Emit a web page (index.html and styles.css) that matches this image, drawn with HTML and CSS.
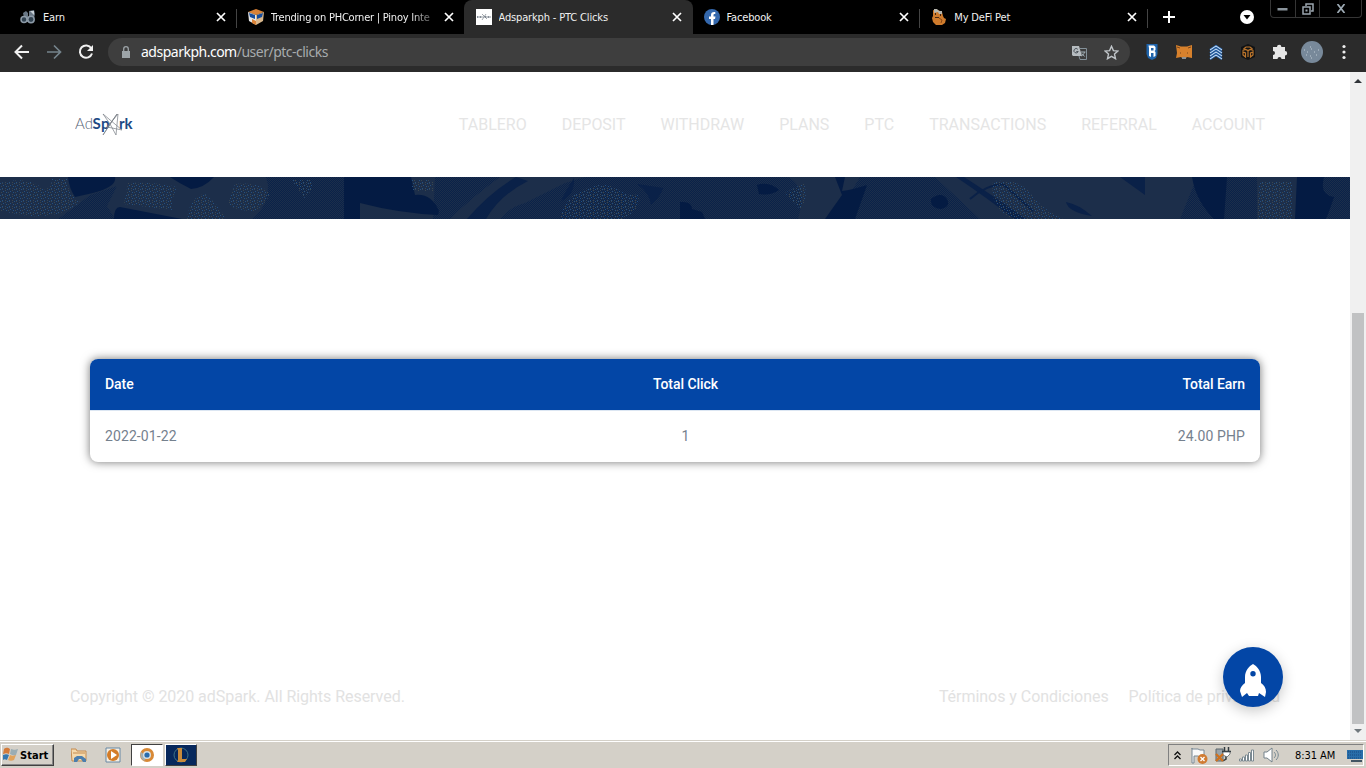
FILE: index.html
```html
<!DOCTYPE html>
<html lang="en">
<head>
    <meta charset="UTF-8">
    <meta name="viewport" content="width=device-width, initial-scale=1.0">
    <title>Adsparkph - PTC Clicks</title>
    <link rel="stylesheet" href="styles.css">
</head>
<body>
    <div class="tab-strip">
        <div class="tab">
            <svg class="favicon" viewBox="0 0 16 16"><path d="M3 4l3-2 2 2v9H5z M9 2l5-1 1 4-2 8H9z" fill="#697785"/><circle cx="4" cy="10.500" r="3" fill="#30414f" stroke="#8c9aa7" stroke-width="1.500"/><circle cx="11" cy="10.500" r="3.200" fill="#30414f" stroke="#8c9aa7" stroke-width="1.500"/><path d="M10 2l4 0v4z" fill="#c8d0d6"/></svg>
            <span class="tab-title">Earn</span>
            <svg class="close" viewBox="0 0 10 10"><path d="M1 1l8 8M9 1l-8 8"/></svg>
        </div>
        <div class="tab divided">
            <svg class="favicon" viewBox="0 0 16 16"><path d="M0 3l8-3 8 3-8 3z" fill="#d98237"/><path d="M0 3l8 3v10l-7-4z" fill="#e8e8e8"/><path d="M16 3l-8 3v10l7-4z" fill="#d9b78c"/><path d="M1 4l6 2v4l-5-2z M15 4l-6 2v4l5-2z" fill="#164c9b"/><path d="M4 10l4 2v4l-4-2z" fill="#d98237"/></svg>
            <span class="tab-title faded">Trending on PHCorner | Pinoy Inte</span>
            <svg class="close" viewBox="0 0 10 10"><path d="M1 1l8 8M9 1l-8 8"/></svg>
        </div>
        <div class="tab active">
            <svg class="favicon" viewBox="0 0 16 16"><path d="M0 0h16v16H0z" fill="#fff"/><path d="M1 8h5M9 8h6" stroke="#868e98" stroke-width="2" stroke-dasharray="1 .5"/><path d="M6 5l5 5M10 5l-4 6M6 8h4" stroke="#79818a" stroke-width=".7"/></svg>
            <span class="tab-title">Adsparkph - PTC Clicks</span>
            <svg class="close" viewBox="0 0 10 10"><path d="M1 1l8 8M9 1l-8 8"/></svg>
        </div>
        <div class="tab">
            <svg class="favicon" viewBox="0 0 16 16"><circle cx="8" cy="8" r="8" fill="#3468ad"/><path d="M7 16V10H5V7.500h2V6c0-2.300 1.300-3.300 4.300-3v2C9.800 4.900 9.500 5.300 9.500 6.300v1.200h2L11 10H9.500v6z" fill="#fff"/></svg>
            <span class="tab-title">Facebook</span>
            <svg class="close" viewBox="0 0 10 10"><path d="M1 1l8 8M9 1l-8 8"/></svg>
        </div>
        <div class="tab divided">
            <svg class="favicon" viewBox="0 0 16 16"><path d="M2 1l3 1 2-1 4 2 1 4 1 2 2 1-1 4-3 2H5l-3-3-1-4 1-2z" fill="#cf7b2c"/><path d="M3 0h3l2 2h3v3H8L7 3 3 4z" fill="#b7b6ad"/><path d="M4 4h1v2H4zM9 5h1v2H9zM4 8h4v1H4z" fill="#442711"/><path d="M8 9l3 2-1 3" stroke="#8b4915" fill="none"/></svg>
            <span class="tab-title">My DeFi Pet</span>
            <svg class="close" viewBox="0 0 10 10"><path d="M1 1l8 8M9 1l-8 8"/></svg>
        </div>
        <div class="new-tab">
            <svg width="12" height="12" viewBox="0 0 12 12"><path d="M6 0v12M0 6h12" stroke="#fff" stroke-width="2"/></svg>
        </div>
        <svg class="tab-search" width="14" height="14" viewBox="0 0 14 14"><circle cx="7" cy="7" r="7" fill="#fff"/><path d="M3.500 5h7L7 9.500z" fill="#000"/></svg>
        <div class="window-buttons">
            <span><svg width="11" height="4" viewBox="0 0 11 4"><path d="M.5 1h10v2.500H.5z" fill="#8a949c"/></svg></span>
            <span><svg width="12" height="12" viewBox="0 0 12 12"><path d="M4 3V1h7v7H9M1 4h7v7H1z" fill="none" stroke="#9aa5ae" stroke-width="1.500"/><path d="M3.500 6.500h2v2h-2z" fill="#9aa5ae"/></svg></span>
            <span><svg width="10" height="9" viewBox="0 0 10 9"><path d="M1.500 0l7 9M8.500 0l-7 9" stroke="#9eabb5" stroke-width="1.700"/></svg></span>
        </div>
    </div>

    <div class="toolbar">
        <div class="nav-buttons">
            <svg width="16" height="16" viewBox="0 0 16 16"><path d="M15 8H2M8 1.500L1.500 8 8 14.500" fill="none" stroke="#f1f1f1" stroke-width="2"/></svg>
            <svg width="16" height="16" viewBox="0 0 16 16"><path d="M1 8h13M8 1.500L14.500 8 8 14.500" fill="none" stroke="#75848c" stroke-width="1.700"/></svg>
            <svg width="16" height="16" viewBox="0 0 16 16"><path d="M13.300 4.200A6.200 6.200 0 1 0 14 9.500" fill="none" stroke="#f1f1f1" stroke-width="2"/><path d="M15 1v6H9z" fill="#f1f1f1"/></svg>
        </div>
        <div class="address-bar">
            <svg width="10" height="12" viewBox="0 0 10 12"><path d="M1 5h8v7H1z" fill="#9da4a8"/><path d="M2.700 5V3a2.300 2.300 0 0 1 4.600 0v2" fill="none" stroke="#9da4a8" stroke-width="1.300"/></svg>
            <span class="url">adsparkph.com<span class="path">/user/ptc-clicks</span></span>
            <svg class="translate" width="15" height="15" viewBox="0 0 15 15"><path d="M0 1h7l3 10H1L0 10z" fill="#b6bcc0"/><path d="M8 3.500h6.500v11H8L7 11" fill="none" stroke="#849199"/><path d="M5.800 4.300a2.200 2.200 0 1 0 .4 2.200H4.300" fill="none" stroke="#4b5259"/><path d="M9 7h4.500M12.500 7c-.5 2-1.500 3-3 4M9.800 8.500l2.800 3" fill="none" stroke="#a3b1b8"/></svg>
            <svg width="15" height="15" viewBox="0 0 15 15"><path d="M7.500 1.300l1.900 4.300 4.500.4-3.400 3.100 1 4.600-4-2.400-4 2.400 1-4.600L1.100 6l4.500-.4z" fill="none" stroke="#c0c5c9" stroke-width="1.400"/></svg>
        </div>
        <div class="extensions">
            <svg width="16" height="16" viewBox="0 0 16 16"><path d="M2.500 0h11v10l-1.500 4-4 2-4-2-1.500-4z" fill="#1f64ab"/><path d="M4.500 1.500H10l1.500 1.500v3l-1 1 1 1v4l-2 1V9H7v4l-2-1V4z" fill="#fff"/><path d="M7 4h2.500v2.500H7z" fill="#1f64ab"/></svg>
            <svg width="16" height="16" viewBox="0 0 16 16"><path d="M0 1l5 1.500h6L16 1v13l-5-1-1.500 1.500h-3L5 13l-5 1 1-5z" fill="#d8812c"/><path d="M1 3l3 1M15 3l-3 1M4 9h1M11 9h1" stroke="#79461d"/><path d="M6 13h4v2H6z" fill="#8c9093"/></svg>
            <svg width="16" height="16" viewBox="0 0 16 16"><path d="M2 6l6-4 6 4M2 9l6-4 6 4M2 12l6-4 6 4M2 15l6-4 6 4" fill="none" stroke="#2969b5" stroke-width="2.200"/><path d="M2 6l6-4 6 4M2 9l6-4 6 4M2 12l6-4 6 4M2 15l6-4 6 4" fill="none" stroke="#d6e6f5" stroke-width="1"/></svg>
            <svg width="16" height="16" viewBox="0 0 16 16"><path d="M8 0l7 3v10l-7 3-7-3V3z" fill="#111315"/><path d="M3.500 5L6 3h4l2.500 2M2.500 6.500l3-1 2.500 1 2.500-1 3 1M3 8v3l2.500 2V9zM13 8v3l-2.500 2V9zM8 7v6" fill="none" stroke="#bd762c" stroke-width="1.200"/></svg>
            <svg width="16" height="16" viewBox="0 0 16 16"><path d="M1 3h4a2.200 2.200 0 1 1 4.400 0H13v4a2.200 2.200 0 1 1 0 4.400V15H9.500a2 2 0 0 0-4 0H1v-4a2 2 0 0 0 0-4z" fill="#e6e6e6"/></svg>
            <svg class="avatar" width="22" height="22" viewBox="0 0 22 22"><circle cx="11" cy="11" r="11" fill="#78899a"/><path d="M3 9h1m2 2h1m3-3h1m2 3h1m3-2h1M5 14h1m3 1h1m5-1h1m-6 3h1M9 6h1" stroke="#c1ccd5"/></svg>
            <svg width="4" height="16" viewBox="0 0 4 16"><circle cx="2" cy="2.500" r="1.600"/><circle cx="2" cy="8" r="1.600"/><circle cx="2" cy="13.500" r="1.600"/></svg>
        </div>
    </div>

    <div class="viewport">
        <div class="page">
            <header class="header">
                <svg class="logo" width="60" height="28" viewBox="0 0 60 28"><text x="0" y="18" textLength="18" class="logo-thin">Ad</text><text x="17.500" y="18" textLength="17" class="logo-bold">Sp</text><text x="44" y="18" textLength="13.500" class="logo-bold">rk</text><path d="M28 3l19 16-15-3 11-13-2 21-6-11-7 11L42 3l-7 10z" fill="none" stroke="#777c84" stroke-width=".7"/></svg>
                <nav class="menu">
                    <a>TABLERO</a>
                    <a>DEPOSIT</a>
                    <a>WITHDRAW</a>
                    <a>PLANS</a>
                    <a>PTC</a>
                    <a>TRANSACTIONS</a>
                    <a>REFERRAL</a>
                    <a>ACCOUNT</a>
                </nav>
            </header>

            <svg class="banner" viewBox="0 0 1350 42" preserveAspectRatio="none">
                <defs>
                    <pattern id="weave" width="2" height="2" patternUnits="userSpaceOnUse"><path d="M0 0h1v1H0zM1 1h1v1H1z" fill="#0a2249"/></pattern>
                    <pattern id="dots" width="7" height="6" patternUnits="userSpaceOnUse"><path d="M0 0h1v1H0zM3 2h1v1H3zM6 3h1v1H6zM2 5h1v1H2z" fill="#25507f"/><path d="M2 0h1v1H2zM5 1h1v1H5zM1 3h1v1H1zM5 5h1v1H5z" fill="#3a464f"/></pattern>
                </defs>
                <path d="M0 0h1350v42H0z" fill="#1c2e4a"/>
                <!-- mid-tone areas -->
                <path d="M58 42q25-18 32-24l27-9-10 20 8 13zM268 8q0 22-16 34h92V0h-78zM435 0h65q-30 22-50 42h-17zM500 42q10-12 25-16l40-20 20-6h95v42h-80zM680 0h108q20 10 10 42h-118zM860 0h75l45 42H835zM1180 42l17-42h60v42zM1310 0h40v42h-22z" fill="url(#weave)"/>
                <!-- dark areas -->
                <path d="M68 0h47q2 10-22 16l-18 4q-6-9-7-20zM170 0h44q-10 11-23 12-12-6-21-12zM114 42q0-12 6-12l62 12zM344 0h67l4 18q16-2 24 16l-1 4q-40-2-78-12v16h-16zM757 8q12-4 22 5-9 6-20 4zM835 0h10l-3 14q10-1 25-6l-12 34h-30l17-24zM931 22q10-8 16 0 4 8-6 10-11-1-10-10zM1192 0h35l-3 42h-10q-18-18-22-42zM1297 0h27q-5 18 10 20-5 15-8 22h-31zM680 25q12-1 12 7l10 3 3 7h-25z" fill="#041b43"/>
                <path d="M467 42q22-26 49-42l12 4q-28 14-42 38zM561 24q14-6 13-23-9 14-13 23zM637 7l26 4q-2 8-12 17-1-12-14-21zM964 0q28 18 62 42h-12q-24-19-58-42zM1066 25q12 2 26 14-24-4-26-14zM1120 0h25v18z" fill="#0a2148"/>
                <path d="M970 22q16-14 33-15l30 27" fill="none" stroke="#0a2148" stroke-width="2"/>
                <!-- speckled highlights -->
                <path d="M0 6q30-8 44 7 8-3 8-11h16q-2 14 12 23-18 16-51 14l-29-5zM128 6q27-1 49 4-6 13-5 23l-48-6zM187 42q3-23 18-25 13 10 21 25zM235 7q23-3 35 9-4 12-16 18-19 0-26-7zM291 3h22q0 12-9 18-6-11-13-18zM412 3h21v11h-21zM560 42q5-23 25-30 20-8 31-1 13 10 22 6 6 12-14 25zM785 16l19-10q5 17-4 26zM993 4q28-2 37 12 10 15 33 26h-49q-25-10-21-38zM1259 4h34v38h-36z" fill="url(#dots)"/>
            </svg>

            <main class="content">
                <table class="clicks-table">
                    <thead>
                        <tr>
                            <th>Date</th>
                            <th>Total Click</th>
                            <th>Total Earn</th>
                        </tr>
                    </thead>
                    <tbody>
                        <tr>
                            <td>2022-01-22</td>
                            <td>1</td>
                            <td>24.00 PHP</td>
                        </tr>
                    </tbody>
                </table>
            </main>

            <footer class="footer">
                <p>Copyright © 2020 adSpark. All Rights Reserved.</p>
                <div class="footer-links">
                    <a>Términos y Condiciones</a>
                    <a>Política de privacidad</a>
                </div>
            </footer>

            <div class="scroll-top">
                <svg width="26" height="34" viewBox="0 0 26 34"><path fill-rule="evenodd" d="M13 0c4 2 8 7 8 13v6c3 2 5 5 5 9l-1 5-6-4-1 3H9l-2-3-5 4-2-6c0-3 2-6 5-8v-6C5 7 9 2 13 0zm0 7a2.700 2.700 0 1 0 0 5.400A2.700 2.700 0 0 0 13 7z" fill="#fff"/></svg>
            </div>
        </div>
        <div class="scrollbar">
            <svg width="8" height="5" viewBox="0 0 8 5"><path d="M0 5l4-4 4 4z" fill="#303438"/></svg>
            <div class="thumb"></div>
            <svg width="8" height="5" viewBox="0 0 8 5"><path d="M0 0h8L4 4z" fill="#71797e"/></svg>
        </div>
    </div>

    <div class="taskbar">
        <div class="start">
            <svg width="16" height="16" viewBox="0 0 16 16"><path d="M1 2c3-2 4-1 6 0L6 7C4 6 3 6 0 7z" fill="#d47a39"/><path d="M8 2c3 1 4 1 7 0l-2 6c-2 1-4 0-6-1z" fill="#9aadb4"/><path d="M0 8c3-1 4-1 6 0l-2 5c-2-1-3-1-4 0z" fill="#3477b1"/><path d="M7 8c2 1 3 1 6 0l-2 5c-2 1-4 1-6 0z" fill="#e1a25b"/></svg>
            <span>Start</span>
        </div>
        <div class="task">
            <svg width="16" height="16" viewBox="0 0 16 16"><path d="M0 2h5l1 2h9v10H1z" fill="#f4d9ad" stroke="#c48b50"/><path d="M2 6h12" stroke="#c48b50" stroke-width="1"/><path d="M3 15v-4l3-2h5l4 3v3h-3l-2-3H8l-2 3z" fill="#4b7eae"/></svg>
        </div>
        <div class="task">
            <svg width="16" height="16" viewBox="0 0 16 16"><path d="M1 1h14v14H1z" fill="#f5eee3" stroke="#6688a5"/><circle cx="8" cy="8" r="6" fill="#d47c28"/><path d="M6 4l6 4-6 4z" fill="#fff"/></svg>
        </div>
        <div class="task pressed">
            <svg width="16" height="16" viewBox="0 0 16 16"><circle cx="8" cy="8" r="7" fill="#d88936"/><path d="M2 5a7 7 0 0 0 3 9l3-4z" fill="#a3afb2"/><circle cx="8" cy="8" r="4" fill="#d7e1e6"/><circle cx="8" cy="8" r="2.600" fill="#286cad"/></svg>
        </div>
        <div class="task league">
            <svg width="18" height="18" viewBox="0 0 18 18"><circle cx="9" cy="9" r="7" fill="none" stroke="#3e7185"/><path d="M5 2h5v11h5l-2 3H5l1-2V4z" fill="#c88a3b"/></svg>
        </div>
        <div class="tray">
            <svg width="7" height="9" viewBox="0 0 7 9"><path d="M.5 4l3-3 3 3M.5 8l3-3 3 3" fill="none" stroke="#111" stroke-width="1.300"/></svg>
            <svg class="flag" width="17" height="17" viewBox="0 0 17 17"><path d="M1 1v15h2V9h4l2 1h4V3H9L7 2H1z" fill="#f9f9f9" stroke="#788895"/><circle cx="11.500" cy="12" r="5" fill="#d07b32"/><path d="M9.500 10l4 4m0-4l-4 4" stroke="#fff" stroke-width="1.300"/></svg>
            <svg class="power" width="16" height="16" viewBox="0 0 16 16"><path d="M1 2h7v12H1z" fill="#9aa3a8" stroke="#5b666d"/><path d="M9.500 0v4m4-4v4M7 4.500h9M11 9v3l-3 2" fill="none" stroke="#313a3f" stroke-width="1.500"/><path d="M8 5h7v2l-3 3-4-2z" fill="#fff" stroke="#4a545a" stroke-width=".7"/><path d="M1 7l7 7m0-7l-7 7" stroke="#cf711e" stroke-width="2.300"/></svg>
            <svg class="signal" width="16" height="13" viewBox="0 0 16 13"><path d="M.5 10h2v2h-2zM3.500 8h2v4h-2zM6.500 6h2v6h-2zM9.500 3.500h2V12h-2zM12.500 1h2v11h-2z" fill="#fff" stroke="#7b8991"/></svg>
            <svg class="speaker" width="17" height="16" viewBox="0 0 17 16"><path d="M1 5h3l5-4v14l-5-4H1z" fill="#fff" stroke="#74828b"/><path d="M11 5c2 2 2 4 0 6M13 3c3 3 3 7 0 10" fill="none" stroke="#758791"/></svg>
            <span class="clock">8:31 AM</span>
            <svg class="desktop" width="16" height="13" viewBox="0 0 16 13"><path d="M0 1h16v9H0z" fill="#286da9"/><path d="M1 3h14M1 6h14M1 9h14" stroke="#194a80" stroke-dasharray="1 1"/><path d="M4 12h11" stroke="#425563" stroke-width="2"/></svg>
        </div>
    </div>
</body>
</html>
```

FILE: styles.css
```css
* {
    box-sizing: border-box;
}
body {
    font-family: Roboto, sans-serif;
    margin: 0;
    width: 1366px;
    height: 768px;
    overflow: hidden;
    display: flex;
    flex-direction: column;
    background-color: #fff;
}
svg {
    display: block;
    flex-shrink: 0;
}
.tab-strip {
    display: flex;
    height: 34px;
    padding-left: 8px;
    background-color: #000;
    color: #f0f0f0;
    font: 11px "DejaVu Sans Condensed", sans-serif;
}
.tab {
    display: flex;
    align-items: center;
    width: 227.75px;
    padding: 0 10px 0 12px;
}
.tab.divided {
    background: linear-gradient(#444, #444) 0 9px / 1px 19px no-repeat;
}
.tab.active {
    width: 229px;
    margin-right: -1px;
    padding-right: 11px;
    background-color: #2b2b2b;
    border-radius: 8px 8px 0 0;
}
.favicon {
    width: 16px;
    height: 16px;
    margin-right: 7px;
}
.tab-title {
    flex: 1;
    overflow: hidden;
    white-space: nowrap;
    letter-spacing: -0.15px;
}
.faded {
    letter-spacing: -0.22px;
    -webkit-mask-image: linear-gradient(to right, #000 84%, rgba(0, 0, 0, 0.2));
    mask-image: linear-gradient(to right, #000 84%, rgba(0, 0, 0, 0.2));
}
.close {
    width: 10px;
    height: 10px;
    margin-left: 8px;
    stroke: #fff;
    stroke-width: 1.7;
}
.new-tab {
    display: flex;
    align-items: center;
    width: 94px;
    padding-left: 16px;
    background: linear-gradient(#444, #444) 0 9px / 1px 19px no-repeat;
}
.tab-search {
    margin: 10px 16px 0 -1px;
}
.window-buttons {
    display: flex;
    width: 92px;
    height: 18px;
    border: 1px solid #353535;
    border-top: 0;
    border-radius: 0 0 4px 4px;
}
.window-buttons span {
    display: flex;
    align-items: center;
    justify-content: center;
    width: 25px;
    border-right: 1px solid #353535;
}
.window-buttons span:last-child {
    width: 41px;
    border: 0;
}
.toolbar {
    display: flex;
    align-items: center;
    height: 38px;
    padding-bottom: 2px;
    background-color: #2b2b2b;
}
.nav-buttons {
    display: flex;
    gap: 16px;
    width: 108px;
    padding-left: 14px;
}
.address-bar {
    display: flex;
    align-items: center;
    width: 1022px;
    height: 28px;
    padding: 0 11px 0 13px;
    border-radius: 14px;
    background-color: #3e3e3e;
}
.url {
    flex: 1;
    margin-left: 10px;
    padding-bottom: 2px;
    color: #fff;
    font: 14px "Noto Sans", sans-serif;
    letter-spacing: -0.5px;
}
.url .path {
    color: #a7abad;
}
.translate {
    margin-right: 17px;
}
.extensions {
    display: flex;
    align-items: center;
    gap: 16px;
    padding-left: 14px;
    fill: #eee;
}
.avatar {
    margin: 0 3px 0 -3px;
}
.viewport {
    display: flex;
    height: 668px;
}
.page {
    position: relative;
    display: flex;
    flex-direction: column;
    width: 1350px;
}
.header {
    display: flex;
    align-items: center;
    justify-content: space-between;
    height: 105px;
    padding: 0 85px 0 75px;
}
.logo-thin {
    font: 300 15px Lato, sans-serif;
    fill: #5a6577;
}
.logo-bold {
    font: bold 15px Lato, sans-serif;
    fill: #1d4a84;
}
.menu {
    display: flex;
    gap: 35px;
    color: #e5e5e5;
    font-size: 16px;
    letter-spacing: -0.01px;
}
.banner {
    width: 1350px;
    height: 42px;
}
.content {
    flex: 1;
    padding: 140px 90px 0;
}
.clicks-table {
    width: 100%;
    table-layout: fixed;
    border-spacing: 0;
    border-radius: 8px;
    overflow: hidden;
    box-shadow: 0 0 10px rgba(0, 0, 0, 0.55);
    font-size: 14px;
}
.clicks-table th {
    height: 51px;
    padding: 0 15px 2px;
    background-color: #0346a6;
    color: #fff;
    font-weight: 500;
    letter-spacing: -0.05px;
    text-align: left;
}
.clicks-table td {
    height: 52px;
    padding: 0 15px 2px;
    border-top: 1px solid #dce6f2;
    color: #75818e;
    letter-spacing: 0.1px;
}
.clicks-table th:first-child {
    width: 400px;
}
.clicks-table th:nth-child(2),
.clicks-table td:nth-child(2) {
    text-align: center;
}
.clicks-table th:last-child,
.clicks-table td:last-child {
    text-align: right;
}
.clicks-table th:last-child {
    width: 379px;
}
.footer {
    display: flex;
    align-items: center;
    justify-content: space-between;
    height: 88px;
    padding: 0 70px;
    color: #e2e2e2;
    font-size: 16px;
    letter-spacing: -0.04px;
}
.footer-links {
    display: flex;
    gap: 20px;
}
.scroll-top {
    position: absolute;
    right: 67px;
    bottom: 33px;
    display: flex;
    align-items: center;
    justify-content: center;
    width: 60px;
    height: 60px;
    padding-top: 7px;
    border-radius: 50%;
    background-color: #0346a6;
    box-shadow: 0 4px 14px rgba(0, 0, 0, 0.22);
}
.scrollbar {
    display: flex;
    flex-direction: column;
    align-items: center;
    justify-content: space-between;
    width: 16px;
    padding: 6px 0;
    background-color: #f0f0f0;
}
.thumb {
    width: 12px;
    height: 411px;
    margin: 224px 0 0;
    background-color: #c1c2c3;
}
.taskbar {
    display: flex;
    align-items: center;
    height: 28px;
    padding: 1px 2px 0 1px;
    border-top: 1px solid #d4d0c8;
    background-color: #d4d0c8;
    box-shadow: inset 0 1px #fff;
    color: #000;
    font: 11px "DejaVu Sans Condensed", sans-serif;
}
.start {
    display: flex;
    align-items: center;
    gap: 1px;
    width: 53px;
    height: 22px;
    margin-right: 9px;
    padding-left: 1px;
    border: 1px solid;
    border-color: #fff #404040 #404040 #fff;
    box-shadow: inset -1px -1px #858585;
    font-weight: bold;
}
.start span {
    letter-spacing: 0.05px;
}
.task {
    display: flex;
    align-items: center;
    justify-content: center;
    width: 32px;
    height: 22px;
    margin-right: 2px;
}
.task.pressed {
    border: 1px solid;
    border-color: #404040 #fff #fff #404040;
    background-color: #fff;
}
.task.league {
    border: 1px solid;
    border-color: #fff #404040 #404040 #fff;
    background-color: #07285c;
}
.tray {
    display: flex;
    align-items: center;
    width: 196px;
    height: 22px;
    margin-left: auto;
    padding-left: 5px;
    border: 1px solid;
    border-color: #808080 #fff #fff #808080;
}
.flag {
    margin-left: 10px;
}
.power {
    margin-left: 7px;
}
.signal {
    margin-left: 8px;
}
.speaker {
    margin-left: 8px;
}
.clock {
    margin-left: 15px;
    letter-spacing: -0.05px;
}
.desktop {
    margin-left: auto;
}
```
